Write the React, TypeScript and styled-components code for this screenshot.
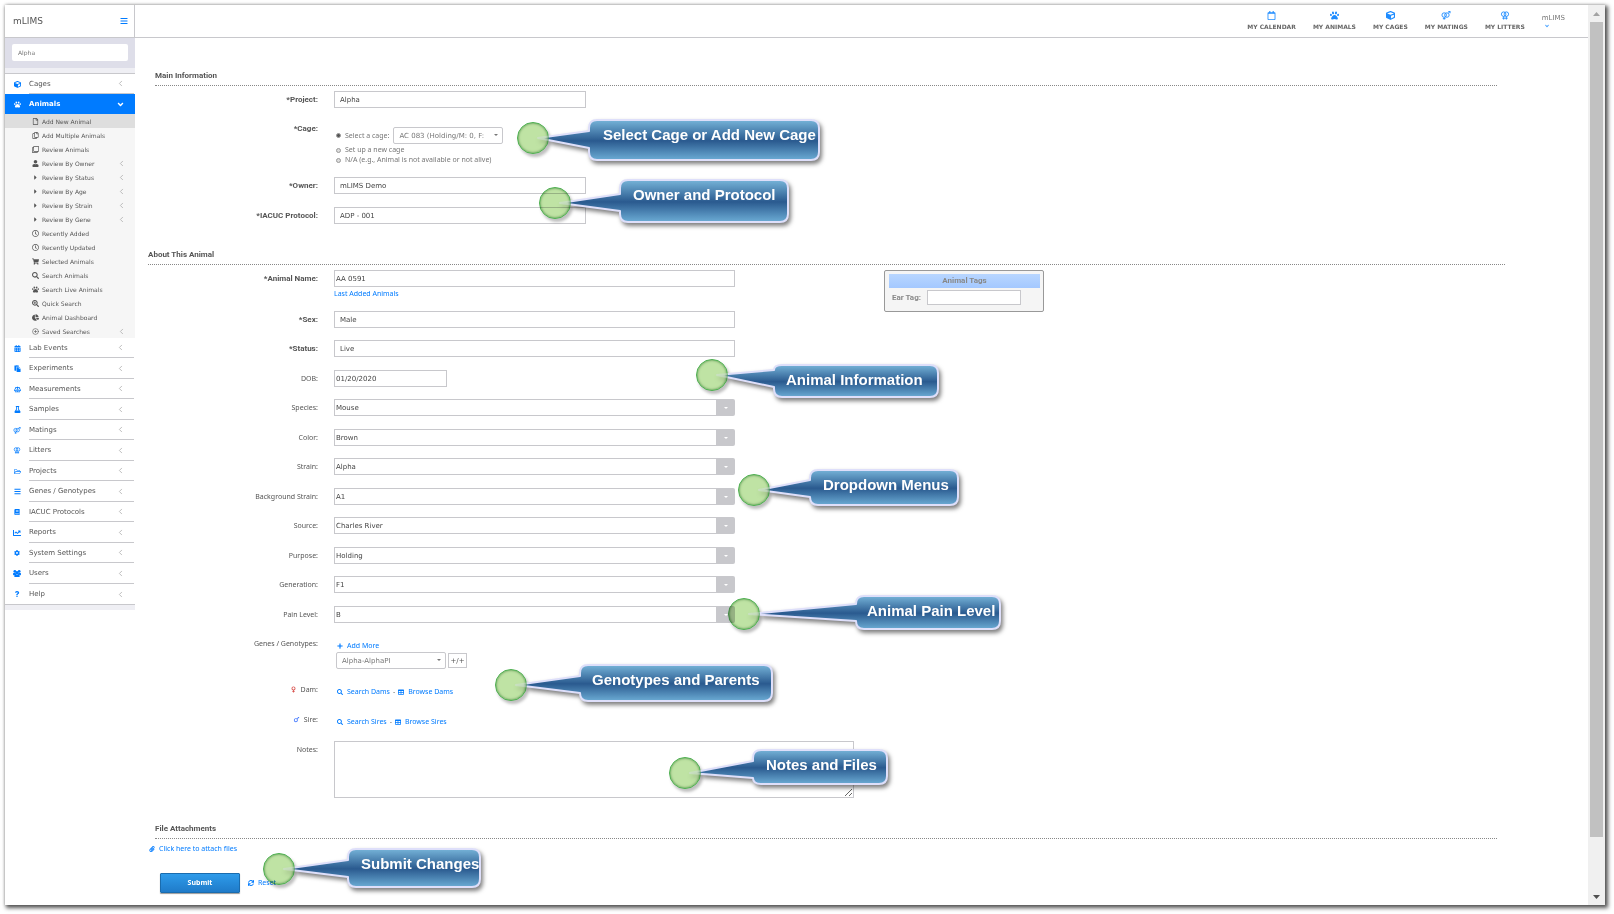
import React from "react";
import styled, { createGlobalStyle, css } from "styled-components";
import type { IconType } from "react-icons";
import {
  FaAngleDown,
  FaBalanceScale,
  FaBars,
  FaBook,
  FaCalendarAlt,
  FaCaretRight,
  FaChartLine,
  FaChartPie,
  FaCog,
  FaCube,
  FaFlask,
  FaMars,
  FaPaperclip,
  FaPaste,
  FaPaw,
  FaPlus,
  FaQuestion,
  FaRegCalendar,
  FaRegClock,
  FaRegClone,
  FaRegCopy,
  FaRegFile,
  FaRegFolderOpen,
  FaSearch,
  FaSearchPlus,
  FaShoppingCart,
  FaSync,
  FaTable,
  FaUser,
  FaVenus,
} from "react-icons/fa";
import { ChevronLeft, CirclePlus } from "lucide-react";

const wide = `"DejaVu Sans", Verdana, sans-serif`;
const plain = `"Noto Sans", "Open Sans", sans-serif`;
const strong = `Roboto, "Liberation Sans", sans-serif`;
const line = "#c8c8cc";
const blue = "#007bff";

const GlobalStyle = createGlobalStyle`
  *, *::before, *::after { box-sizing: border-box; }
  body { margin: 0; background: #fff; color: #555; font: 7px/10px ${plain}; }
  a { color: ${blue}; text-decoration: none; }
  ul { list-style: none; margin: 0; padding: 0; }
  input, select, textarea, button { font: inherit; color: inherit; margin: 0; }
  svg { display: block; flex: none; }
`;

/* ---------- page frame ---------- */

const Page = styled.div`
  position: relative;
  display: flex;
  min-height: 100vh;
  padding: 5px 9px 9px 5px;
`;

const Frame = styled.div`
  display: flex;
  flex: 1;
  min-width: 0;
  background: #fff;
  box-shadow: 2px 2px 4px 1px rgba(0, 0, 0, 0.65), 0 0 3px rgba(0, 0, 0, 0.2);
`;

const ScrollTrack = styled.div`
  display: flex;
  flex-direction: column;
  flex: none;
  width: 17px;
  padding: 0 2px;
  background: #f0f0f0;
`;

const ScrollEnd = styled.div<{ $tone: string }>`
  display: grid;
  place-items: center;
  height: 17px;
  color: ${(p) => p.$tone};
`;

const ScrollThumb = styled.div`
  flex: 16;
  background: #c1c1c1;
`;

const ScrollRest = styled.div`
  flex: 1;
`;

/* ---------- sidebar ---------- */

const Sidebar = styled.aside`
  flex: none;
  width: 130px;
  font-family: ${wide};
`;

const Brand = styled.div`
  display: flex;
  align-items: center;
  justify-content: space-between;
  height: 33px;
  padding: 0 6px 0 8px;
  border-right: 1px solid ${line};
  border-bottom: 1px solid ${line};
  font-size: 9px;
`;

const IconButton = styled.button`
  padding: 0;
  border: 0;
  background: none;
  color: ${blue};
`;

const SearchArea = styled.div`
  padding: 6px 7px 7px;
  background: #dedee9;
`;

const SearchInput = styled.input`
  display: block;
  width: 100%;
  height: 17px;
  padding: 0 6px;
  border: 0;
  border-radius: 2px;
  background: #fff;
  font-size: 6px;
  color: #777;
`;

const SidebarStrip = styled.div`
  height: 5px;
  background: #efeff4;
`;

const MenuList = styled.ul`
  border-top: 1px solid ${line};
  border-bottom: 1px solid ${line};
`;

const MenuLink = styled.a<{ $tall?: boolean; $active?: boolean }>`
  display: flex;
  align-items: stretch;
  height: ${(p) => (p.$tall ? 21 : 20)}px;
  padding-right: 1px;
  color: #555;
  ${(p) =>
    p.$active &&
    css`
      background: ${blue};
      color: #fff;
      font-weight: 700;
    `}
`;

const MenuIcon = styled.span<{ $active?: boolean }>`
  display: grid;
  place-items: center;
  width: 24px;
  color: ${(p) => (p.$active ? "#fff" : blue)};
`;

const MenuText = styled.span<{ $rule: boolean }>`
  display: flex;
  flex: 1;
  align-items: center;
  justify-content: space-between;
  padding-right: 9px;
  border-bottom: ${(p) => (p.$rule ? `1px solid ${line}` : "0")};
  white-space: nowrap;

  svg.chevron {
    color: #aaa;
  }
`;

const SubList = styled.ul`
  background: #f6f6f6;
  font-size: 6px;
`;

const SubLink = styled.a<{ $active: boolean }>`
  display: flex;
  align-items: center;
  height: 14px;
  padding: 1px 9px 0 26px;
  background: ${(p) => (p.$active ? "#dedede" : "transparent")};
  color: #555;
  white-space: nowrap;

  svg.chevron {
    margin-left: auto;
    color: #aaa;
  }
`;

const SubIcon = styled.span`
  display: grid;
  place-items: center;
  width: 9px;
  margin-right: 2px;
`;

/* ---------- main column ---------- */

const Main = styled.main`
  flex: 1;
  min-width: 0;
`;

const TopBar = styled.header`
  display: flex;
  align-items: center;
  justify-content: flex-end;
  gap: 17px;
  height: 33px;
  padding-right: 23px;
  border-bottom: 1px solid ${line};
  font-family: ${wide};
`;

const TopLink = styled.a`
  display: flex;
  flex-direction: column;
  align-items: center;
  gap: 2px;
  font-size: 6px;
  font-weight: 700;
  color: #666;
  white-space: nowrap;

  svg {
    color: #1e8cff;
  }
`;

const AccountButton = styled.button`
  display: flex;
  flex-direction: column;
  align-items: flex-start;
  padding: 0;
  border: 0;
  background: none;
  color: #777;

  svg {
    margin-left: 2px;
    color: #4aa3ff;
  }
`;

const Form = styled.form`
  padding: 30px 0 12px;
`;

const SectionTitle = styled.h2<{ $wide?: boolean }>`
  margin: ${(p) => (p.$wide ? "0 83px 5px 13px" : "0 91px 5px 20px")};
  padding-bottom: 1px;
  border-bottom: 1px dotted #888;
  font: 700 8px/16px ${strong};
`;

const Section = styled.section`
  & + & {
    margin-top: 23px;
  }
`;

const Columns = styled.div`
  display: flex;
  align-items: flex-start;
  gap: 30px;
`;

const FieldList = styled.div`
  flex: 0 1 719px;
  min-width: 0;
`;

const Row = styled.div<{ $loose?: boolean }>`
  display: grid;
  grid-template-columns: 183px minmax(0, 1fr);
  column-gap: 16px;
  align-items: start;

  &:not(:first-of-type) {
    margin-top: ${(p) => (p.$loose ? 13 : 12)}px;
  }
`;

const labelStyle = css<{ $required?: boolean }>`
  display: flex;
  align-items: center;
  justify-content: flex-end;
  gap: 4px;
  min-height: 17px;
  white-space: nowrap;
  ${(p) =>
    p.$required &&
    css`
      font-family: ${strong};
      font-size: 8px;
      font-weight: 700;
    `}
`;

const Label = styled.label`
  ${labelStyle}
`;

const LabelText = styled.span`
  ${labelStyle}
`;

const boxStyle = css<{ $width?: number; $inset?: boolean }>`
  display: block;
  width: 100%;
  max-width: ${(p) => p.$width ?? 401}px;
  height: 17px;
  padding: 0 ${(p) => (p.$inset ? 5 : 1)}px;
  border: 1px solid ${line};
  border-radius: 0;
  background: #fff;
  font-family: ${wide};
  color: #444;
`;

const TextBox = styled.input`
  ${boxStyle}
`;

const SelectBox = styled.select`
  ${boxStyle}
  appearance: none;
`;

const ComboWrap = styled.div`
  display: flex;
  max-width: 401px;
  border-radius: 0 2px 2px 0;
  overflow: hidden;
`;

const ComboArrow = styled.button`
  display: grid;
  place-items: center;
  flex: none;
  width: 18px;
  padding: 0;
  border: 0;
  background: ${line};
  color: #fff;
`;

const PickerWrap = styled.span`
  position: relative;
  display: block;
  width: 110px;

  svg {
    position: absolute;
    top: 7px;
    right: 5px;
    color: #777;
    pointer-events: none;
  }
`;

const Picker = styled.select`
  appearance: none;
  display: block;
  width: 100%;
  height: 17px;
  padding: 0 12px 0 5px;
  border: 1px solid ${line};
  border-radius: 2px;
  background: #fff;
  font-family: ${wide};
  color: #777;
`;

const CageOptions = styled.div`
  padding-top: 7px;
  color: #777;
`;

const OptionRow = styled.div`
  display: flex;
  align-items: center;
  gap: 4px;
  height: 10px;
`;

const FirstOption = styled(OptionRow)`
  height: 17px;
  margin-bottom: 1px;
`;

const OptionLabel = styled.label`
  display: flex;
  align-items: center;
  gap: 4px;
  white-space: nowrap;
`;

const Radio = styled.input`
  appearance: none;
  width: 5px;
  height: 5px;
  margin-left: 2px;
  border: 1px solid #999;
  border-radius: 50%;
  background: #ddd;

  &:checked {
    background: #555;
  }
`;

const BelowLink = styled.a`
  display: block;
  margin-top: 1px;
  line-height: 11px;
`;

const IconLink = styled.a`
  display: inline-flex;
  align-items: center;
  gap: 4px;
  white-space: nowrap;
`;

const ParentLinks = styled.div`
  display: flex;
  align-items: center;
  gap: 3px;
  padding: 3px 0 0 3px;
  line-height: 15px;
`;

const Genotypes = styled.div`
  padding: 5px 0 0 2px;
`;

const AddMore = styled(IconLink)`
  display: flex;
  margin-bottom: 1px;
  padding-left: 1px;
  line-height: 11px;
`;

const GenotypeRow = styled.div`
  display: flex;
  align-items: center;
  gap: 2px;
`;

const GenotypeBox = styled.input`
  width: 19px;
  height: 15px;
  padding: 0;
  border: 1px solid ${line};
  font-family: ${wide};
  text-align: center;
`;

const Notes = styled.textarea`
  display: block;
  width: 100%;
  max-width: 520px;
  height: 57px;
  border: 1px solid ${line};
  background: #fff;
  resize: both;
`;

const TagCard = styled.aside`
  flex: none;
  width: 160px;
  padding: 3px 3px 6px 4px;
  border: 1px solid #999;
  border-radius: 2px;
  background: #f5f5f5;
  font: 700 8px/14px ${strong};
  color: #888;
`;

const TagTitle = styled.div`
  margin-bottom: 2px;
  background: linear-gradient(#b8d6ff, #a3c8ff);
  text-align: center;
`;

const TagRow = styled.label`
  display: flex;
  align-items: center;
  gap: 6px;
  padding-left: 3px;
`;

const TagInput = styled.input`
  width: 94px;
  height: 15px;
  border: 1px solid ${line};
  background: #fff;
`;

const AttachLink = styled(IconLink)`
  display: flex;
  padding-left: 14px;
`;

const Actions = styled.div`
  display: flex;
  align-items: center;
  gap: 8px;
  margin-top: 19px;
  padding-left: 25px;
`;

const SubmitButton = styled.button`
  width: 80px;
  height: 20px;
  padding: 0;
  border: 1px solid #1a6cae;
  border-radius: 1px;
  background: linear-gradient(#2e9bea, #1f7bc9);
  box-shadow: 0 1px 1px rgba(0, 0, 0, 0.4);
  color: #fff;
  font-weight: 700;
`;

const ResetButton = styled.button`
  display: flex;
  align-items: center;
  gap: 4px;
  padding: 0;
  border: 0;
  background: none;
  color: ${blue};
`;

/* ---------- annotation callouts ---------- */

const CalloutLayer = styled.div<{ $x: number; $y: number }>`
  position: absolute;
  left: ${(p) => p.$x}px;
  top: ${(p) => p.$y}px;
  pointer-events: none;

  svg {
    overflow: visible;
    filter: drop-shadow(2px 3px 2px rgba(0, 0, 0, 0.5));
  }
`;

const CalloutText = styled.span<{ $x: number; $y: number }>`
  position: absolute;
  left: ${(p) => p.$x}px;
  top: ${(p) => p.$y}px;
  font: 700 15px/18px "Liberation Sans", Arial, sans-serif;
  color: #fff;
  white-space: nowrap;
`;

const Dot = styled.span<{ $x: number; $y: number }>`
  position: absolute;
  left: ${(p) => p.$x - 16}px;
  top: ${(p) => p.$y - 16}px;
  width: 32px;
  height: 32px;
  border: 1px solid #4bae50;
  border-radius: 50%;
  background: #bfe3a4;
  mix-blend-mode: multiply;
  box-shadow: inset 0 0 2px 1px rgba(70, 130, 60, 0.5), 2px 3px 3px rgba(0, 0, 0, 0.25);
`;

interface CalloutProps {
  id: string;
  text: string;
  dot: [number, number];
  box: [number, number, number, number];
  textAt: [number, number];
  tail: number;
}

function Callout({ id, text, dot, box, textAt, tail }: CalloutProps) {
  const [left, top, right, bottom] = box;
  const w = right - left - 2;
  const h = bottom - top - 2;
  const r = 8;
  const dotX = dot[0] - left;
  const dotY = dot[1] - top;
  const d = [
    `M${1 + r} 1`,
    `H${w + 1 - r}`,
    `Q${w + 1} 1 ${w + 1} ${1 + r}`,
    `V${h + 1 - r}`,
    `Q${w + 1} ${h + 1} ${w + 1 - r} ${h + 1}`,
    `H${1 + r}`,
    `Q1 ${h + 1} 1 ${Math.max(h + 1 - r, tail + 17)}`,
    `V${tail + 17}`,
    `L${dotX + 5} ${dotY}`,
    `L1 ${tail}`,
    `V${Math.min(1 + r, tail)}`,
    `Q1 1 ${1 + r} 1`,
    "Z",
  ].join(" ");
  return (
    <CalloutLayer $x={left} $y={top}>
      <Dot $x={dotX} $y={dotY} />
      <svg width={right - left} height={bottom - top}>
        <defs>
          <linearGradient id={id} gradientUnits="userSpaceOnUse" x1="0" y1="0" x2="0" y2={bottom - top}>
            <stop offset="0" stopColor="#7ab8dc" />
            <stop offset="0.52" stopColor="#2a5a8f" />
            <stop offset="1" stopColor="#6fb0d8" />
          </linearGradient>
          <mask id={`${id}-fade`} maskUnits="userSpaceOnUse" x={dotX - 20} y="-40" width={right - left - dotX + 40} height="140">
            <rect x={dotX - 20} y="-40" width={right - left - dotX + 40} height="140" fill="#fff" />
            <circle cx={dotX} cy={dotY} r="16" fill="#555" />
          </mask>
        </defs>
        <path
          d={d}
          fill={`url(#${id})`}
          stroke="#dedffa"
          strokeWidth="2"
          strokeLinejoin="round"
          mask={`url(#${id}-fade)`}
        />
      </svg>
      <CalloutText $x={textAt[0] - left} $y={textAt[1] - top - 9}>
        {text}
      </CalloutText>
    </CalloutLayer>
  );
}

const callouts: CalloutProps[] = [
  { id: "cage", text: "Select Cage or Add New Cage", dot: [533, 138], box: [588, 119, 820, 161], textAt: [603, 135], tail: 12 },
  { id: "owner", text: "Owner and Protocol", dot: [555, 203], box: [619, 179, 789, 223], textAt: [633, 195], tail: 15 },
  { id: "info", text: "Animal Information", dot: [712, 375], box: [773, 364, 939, 398], textAt: [786, 380], tail: 6 },
  { id: "menus", text: "Dropdown Menus", dot: [754, 490], box: [809, 469, 959, 506], textAt: [823, 485], tail: 11 },
  { id: "pain", text: "Animal Pain Level", dot: [744, 614], box: [855, 595, 1001, 630], textAt: [867, 611], tail: 9 },
  { id: "parents", text: "Genotypes and Parents", dot: [511, 685], box: [579, 664, 773, 702], textAt: [592, 680], tail: 12 },
  { id: "files", text: "Notes and Files", dot: [685, 773], box: [752, 749, 888, 785], textAt: [766, 765], tail: 12 },
  { id: "submit", text: "Submit Changes", dot: [279, 869], box: [347, 848, 481, 888], textAt: [361, 864], tail: 12 },
];

/* ---------- drawn icons ---------- */

interface IconProps {
  size?: number;
}

const MatingIcon = ({ size = 10 }: IconProps) => (
  <svg width={size + 1} height={size} viewBox="0 0 22 20" fill="none" stroke="currentColor" strokeWidth="2">
    <circle cx="7" cy="9" r="5" />
    <circle cx="13" cy="9" r="5" />
    <path d="M7 14v5M4 17h6M16 5l4-4M16 1h4v4" />
  </svg>
);

const LitterIcon = ({ size = 10 }: IconProps) => (
  <svg width={size + 1} height={size} viewBox="0 0 22 20" fill="none" stroke="currentColor" strokeWidth="2">
    <circle cx="8" cy="7" r="5" />
    <circle cx="14" cy="7" r="5" />
    <path d="M8 12v7M14 12v7M5 16h12" />
  </svg>
);

const UsersIcon = ({ size = 8 }: IconProps) => (
  <svg width={size + 1} height={size} viewBox="0 0 18 16" fill="currentColor">
    <circle cx="4" cy="3" r="3" />
    <circle cx="14" cy="3" r="3" />
    <circle cx="9" cy="6" r="4" />
    <path d="M0 11V8q0-2 2-2h3l2 3-3 3H1zM18 11V8q0-2-2-2h-3l-2 3 3 3h3zM3 16v-3q0-3 3-3h6q3 0 3 3v3z" />
  </svg>
);

type Drawing = IconType | React.ComponentType<IconProps>;

/* ---------- data ---------- */

const animalItems: { text: string; icon: Drawing | typeof CirclePlus; more?: boolean }[] = [
  { text: "Add New Animal", icon: FaRegFile },
  { text: "Add Multiple Animals", icon: FaRegCopy },
  { text: "Review Animals", icon: FaRegClone },
  { text: "Review By Owner", icon: FaUser, more: true },
  { text: "Review By Status", icon: FaCaretRight, more: true },
  { text: "Review By Age", icon: FaCaretRight, more: true },
  { text: "Review By Strain", icon: FaCaretRight, more: true },
  { text: "Review By Gene", icon: FaCaretRight, more: true },
  { text: "Recently Added", icon: FaRegClock },
  { text: "Recently Updated", icon: FaRegClock },
  { text: "Selected Animals", icon: FaShoppingCart },
  { text: "Search Animals", icon: FaSearch },
  { text: "Search Live Animals", icon: FaPaw },
  { text: "Quick Search", icon: FaSearchPlus },
  { text: "Animal Dashboard", icon: FaChartPie },
  { text: "Saved Searches", icon: CirclePlus, more: true },
];

const menuItems: { text: string; icon: Drawing; size?: number }[] = [
  { text: "Lab Events", icon: FaCalendarAlt },
  { text: "Experiments", icon: FaPaste },
  { text: "Measurements", icon: FaBalanceScale },
  { text: "Samples", icon: FaFlask },
  { text: "Matings", icon: MatingIcon },
  { text: "Litters", icon: LitterIcon },
  { text: "Projects", icon: FaRegFolderOpen },
  { text: "Genes / Genotypes", icon: FaBars },
  { text: "IACUC Protocols", icon: FaBook, size: 6 },
  { text: "Reports", icon: FaChartLine, size: 8 },
  { text: "System Settings", icon: FaCog, size: 6 },
  { text: "Users", icon: UsersIcon },
  { text: "Help", icon: FaQuestion, size: 6 },
];

const topLinks: { text: string; icon: Drawing }[] = [
  { text: "MY CALENDAR", icon: FaRegCalendar },
  { text: "MY ANIMALS", icon: FaPaw },
  { text: "MY CAGES", icon: FaCube },
  { text: "MY MATINGS", icon: MatingIcon },
  { text: "MY LITTERS", icon: LitterIcon },
];

const combos = [
  ["Species", "Mouse"],
  ["Color", "Brown"],
  ["Strain", "Alpha"],
  ["Background Strain", "A1"],
  ["Source", "Charles River"],
  ["Purpose", "Holding"],
  ["Generation", "F1"],
  ["Pain Level", "B"],
];

/* ---------- parts ---------- */

function Triangle({ up, width = 5 }: { up?: boolean; width?: number }) {
  const half = Math.ceil(width / 2);
  return (
    <svg width={width} height={half} viewBox={`0 0 ${width} ${half}`}>
      <path d={up ? `M0 ${half}H${width}L${width / 2} 0Z` : `M0 0H${width}L${width / 2} ${half}Z`} fill="currentColor" />
    </svg>
  );
}

const Chevron = () => <ChevronLeft className="chevron" size={9} strokeWidth={2} />;

interface MenuEntryProps {
  text: string;
  icon: Drawing;
  size?: number;
  tall?: boolean;
  last?: boolean;
}

function MenuEntry({ text, icon: Icon, size = 7, tall, last }: MenuEntryProps) {
  return (
    <li>
      <MenuLink href="#" $tall={tall}>
        <MenuIcon>
          <Icon size={size} />
        </MenuIcon>
        <MenuText $rule={!last}>
          {text}
          <Chevron />
        </MenuText>
      </MenuLink>
    </li>
  );
}

function PlainSelect({ name, value, width, loose }: { name: string; value: string; width?: number; loose?: boolean }) {
  return (
    <Row $loose={loose}>
      <Label htmlFor={name} $required>
        *{name}:
      </Label>
      <SelectBox id={name} $width={width} $inset>
        <option>{value}</option>
      </SelectBox>
    </Row>
  );
}

function ComboField({ name, value, loose }: { name: string; value: string; loose: boolean }) {
  return (
    <Row $loose={loose}>
      <Label htmlFor={name}>{name}:</Label>
      <ComboWrap>
        <TextBox id={name} defaultValue={value} />
        <ComboArrow type="button" aria-label={`Show ${name} list`}>
          <Triangle width={4} />
        </ComboArrow>
      </ComboWrap>
    </Row>
  );
}

function ParentField({ name, icon }: { name: string; icon: React.ReactNode }) {
  return (
    <Row>
      <LabelText>
        {icon}
        {name}:
      </LabelText>
      <ParentLinks>
        <IconLink href="#">
          <FaSearch size={6} />
          Search {name}s
        </IconLink>
        -
        <IconLink href="#">
          <FaTable size={6} />
          Browse {name}s
        </IconLink>
      </ParentLinks>
    </Row>
  );
}

export default function App() {
  return (
    <Page>
      <GlobalStyle />
      <Frame>
        <Sidebar>
          <Brand>
            mLIMS
            <IconButton type="button" aria-label="Toggle menu">
              <FaBars size={8} />
            </IconButton>
          </Brand>
          <SearchArea>
            <SearchInput aria-label="Search" defaultValue="Alpha" />
          </SearchArea>
          <SidebarStrip />
          <MenuList>
            <MenuEntry text="Cages" icon={FaCube} />
            <li>
              <MenuLink href="#" $active>
                <MenuIcon $active>
                  <FaPaw size={7} />
                </MenuIcon>
                <MenuText $rule={false}>
                  Animals
                  <FaAngleDown size={9} />
                </MenuText>
              </MenuLink>
              <SubList>
                {animalItems.map(({ text, icon: Icon, more }, i) => (
                  <li key={text}>
                    <SubLink href="#" $active={i === 0}>
                      <SubIcon>
                        <Icon size={7} />
                      </SubIcon>
                      {text}
                      {more && <Chevron />}
                    </SubLink>
                  </li>
                ))}
              </SubList>
            </li>
            {menuItems.map((item, i) => (
              <MenuEntry key={item.text} {...item} tall={i % 2 === 1} last={i === menuItems.length - 1} />
            ))}
          </MenuList>
          <SidebarStrip />
        </Sidebar>

        <Main>
          <TopBar>
            {topLinks.map(({ text, icon: Icon }) => (
              <TopLink key={text} href="#">
                <Icon size={9} />
                {text}
              </TopLink>
            ))}
            <AccountButton type="button">
              mLIMS
              <FaAngleDown size={6} />
            </AccountButton>
          </TopBar>

          <Form onSubmit={(e) => e.preventDefault()}>
            <Section>
              <SectionTitle>Main Information</SectionTitle>
              <PlainSelect name="Project" value="Alpha" width={252} />
              <Row>
                <LabelText $required>*Cage:</LabelText>
                <CageOptions role="radiogroup" aria-label="Cage">
                  <FirstOption>
                    <OptionLabel>
                      <Radio type="radio" name="cage" defaultChecked />
                      Select a cage:
                    </OptionLabel>
                    <PickerWrap>
                      <Picker aria-label="Existing cage">
                        <option>AC 083 (Holding/M: 0, F: </option>
                      </Picker>
                      <Triangle width={4} />
                    </PickerWrap>
                  </FirstOption>
                  <OptionRow>
                    <OptionLabel>
                      <Radio type="radio" name="cage" />
                      Set up a new cage
                    </OptionLabel>
                  </OptionRow>
                  <OptionRow>
                    <OptionLabel>
                      <Radio type="radio" name="cage" />
                      N/A (e.g., Animal is not available or not alive)
                    </OptionLabel>
                  </OptionRow>
                </CageOptions>
              </Row>
              <PlainSelect name="Owner" value="mLIMS Demo" width={252} />
              <PlainSelect name="IACUC Protocol" value="ADP - 001" width={252} loose />
            </Section>

            <Section>
              <SectionTitle $wide>About This Animal</SectionTitle>
              <Columns>
                <FieldList>
                  <Row>
                    <Label htmlFor="animal-name" $required>
                      *Animal Name:
                    </Label>
                    <div>
                      <TextBox id="animal-name" defaultValue="AA 0591" />
                      <BelowLink href="#">Last Added Animals</BelowLink>
                    </div>
                  </Row>
                  <PlainSelect name="Sex" value="Male" />
                  <PlainSelect name="Status" value="Live" />
                  <Row $loose>
                    <Label htmlFor="dob">DOB:</Label>
                    <TextBox id="dob" $width={113} defaultValue="01/20/2020" />
                  </Row>
                  {combos.map(([name, value], i) => (
                    <ComboField key={name} name={name} value={value} loose={i % 2 === 1} />
                  ))}
                  <Row>
                    <LabelText>Genes / Genotypes:</LabelText>
                    <Genotypes>
                      <AddMore href="#">
                        <FaPlus size={6} />
                        Add More
                      </AddMore>
                      <GenotypeRow>
                        <PickerWrap>
                          <Picker aria-label="Gene">
                            <option>Alpha-AlphaPI</option>
                          </Picker>
                          <Triangle width={4} />
                        </PickerWrap>
                        <GenotypeBox aria-label="Genotype" defaultValue="+/+" />
                      </GenotypeRow>
                    </Genotypes>
                  </Row>
                  <ParentField name="Dam" icon={<FaVenus size={7} color="#d9534f" />} />
                  <ParentField name="Sire" icon={<FaMars size={7} color="#4a7dff" />} />
                  <Row>
                    <Label htmlFor="notes">Notes:</Label>
                    <Notes id="notes" />
                  </Row>
                </FieldList>
                <TagCard>
                  <TagTitle>Animal Tags</TagTitle>
                  <TagRow>
                    Ear Tag:
                    <TagInput />
                  </TagRow>
                </TagCard>
              </Columns>
            </Section>

            <Section>
              <SectionTitle>File Attachments</SectionTitle>
              <AttachLink href="#">
                <FaPaperclip size={6} />
                Click here to attach files
              </AttachLink>
              <Actions>
                <SubmitButton type="submit">Submit</SubmitButton>
                <ResetButton type="reset">
                  <FaSync size={6} />
                  Reset
                </ResetButton>
              </Actions>
            </Section>
          </Form>
        </Main>

        <ScrollTrack aria-hidden="true">
          <ScrollEnd $tone="#a3a3a3">
            <Triangle up width={7} />
          </ScrollEnd>
          <ScrollThumb />
          <ScrollRest />
          <ScrollEnd $tone="#505050">
            <Triangle width={7} />
          </ScrollEnd>
        </ScrollTrack>
      </Frame>
      {callouts.map((c) => (
        <Callout key={c.id} {...c} />
      ))}
    </Page>
  );
}
